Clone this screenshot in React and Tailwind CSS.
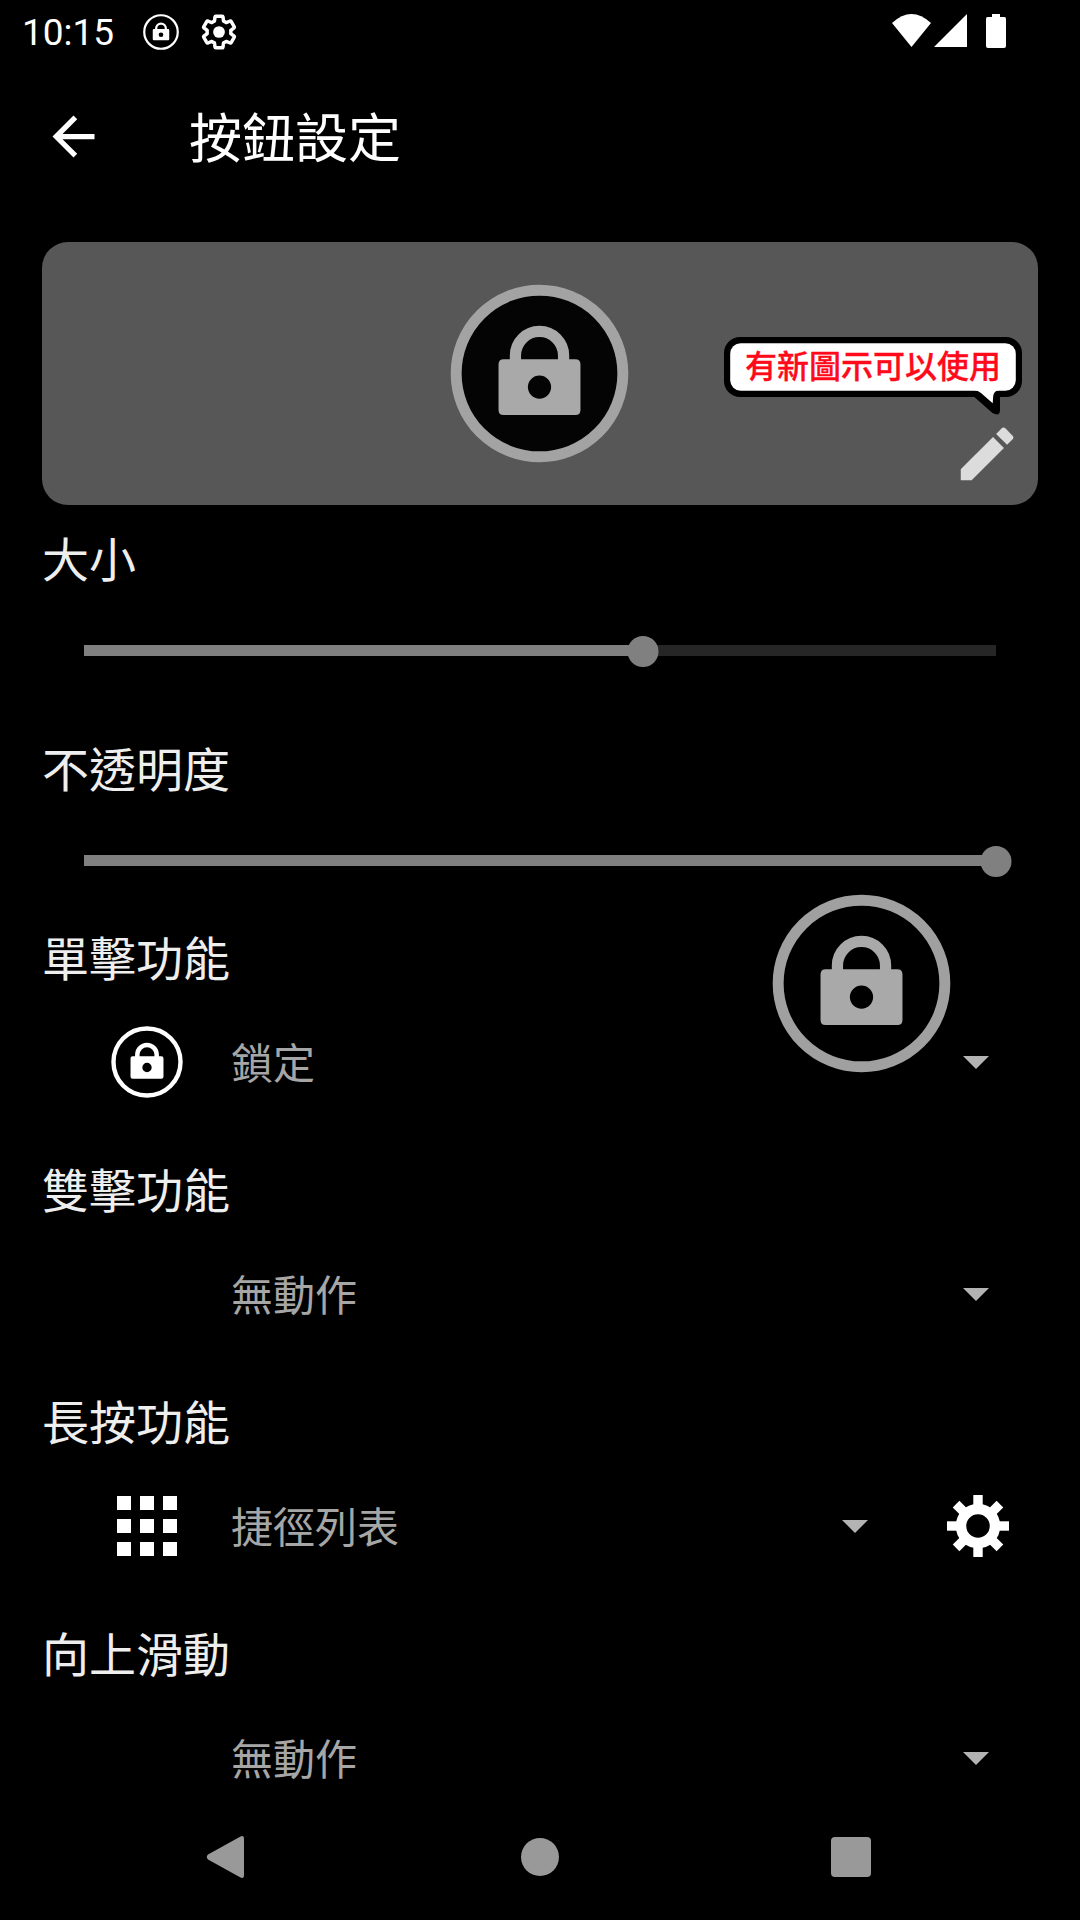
import { MdArrowBack, MdEdit } from 'react-icons/md';

const ACTIONS = [
    { id: 'single', title: '單擊功能', value: '鎖定', icon: 'lock' },
    { id: 'double', title: '雙擊功能', value: '無動作' },
    { id: 'long', title: '長按功能', value: '捷徑列表', icon: 'grid', configurable: true },
    { id: 'swipe-up', title: '向上滑動', value: '無動作' },
];

export default function App() {
    return (
        <div
            lang="zh-TW"
            className="relative flex h-[1920px] w-[1080px] flex-col overflow-hidden bg-black font-['Noto_Sans_CJK_TC',sans-serif]"
        >
            <StatusBar />

            {/* App bar */}
            <header className="flex h-[147px] shrink-0 items-center pl-[42px] text-white">
                <MdArrowBack className="size-[63px]" />
                <h1 className="ml-[84px] pb-[4px] text-[53px] leading-[64px]">按鈕設定</h1>
            </header>

            <main className="flex flex-1 flex-col overflow-hidden">
                <PreviewCard />
                <SliderSetting title="大小" percent={61.35} className="mt-[19px]" />
                <SliderSetting title="不透明度" percent={100} className="mt-[21px]" />
                <div className="flex flex-col gap-[18px]">
                    {ACTIONS.map((action) => (
                        <ActionSetting key={action.id} {...action} />
                    ))}
                </div>
            </main>

            <NavigationBar />

            {/* Floating button shown on top of the page */}
            <LockIcon
                className="absolute top-[894px] left-[772px] size-[179px]"
                ring="#a0a0a0"
                color="#a9a9a9"
            />
        </div>
    );
}

function StatusBar() {
    return (
        <div className="flex h-[63px] shrink-0 items-center justify-between pr-[74px] pl-[22px] text-white">
            <div className="flex items-center">
                <span className="w-[121px] pt-[2px] font-[Roboto,sans-serif] text-[37px] leading-[44px]">10:15</span>
                <LockIcon className="size-[36px]" ring="#fff" color="#fff" />
                <svg viewBox="0 0 24 24" className="ml-[21px] size-[38px]" fill="none">
                    <path
                        d="M19.43 12.98c.04-.32.07-.64.07-.98s-.03-.66-.07-.98l2.11-1.65c.19-.15.24-.42.12-.64l-2-3.46a.5.5 0 0 0-.61-.22l-2.49 1c-.52-.4-1.08-.73-1.69-.98l-.38-2.65A.49.49 0 0 0 14 2h-4c-.25 0-.46.18-.49.42l-.38 2.65c-.61.25-1.17.59-1.69.98l-2.49-1a.5.5 0 0 0-.61.22l-2 3.46c-.13.22-.07.49.12.64l2.11 1.65c-.04.32-.07.65-.07.98s.03.66.07.98l-2.11 1.65c-.19.15-.24.42-.12.64l2 3.46c.12.22.39.3.61.22l2.49-1c.52.4 1.08.73 1.69.98l.38 2.65c.03.24.24.42.49.42h4c.25 0 .46-.18.49-.42l.38-2.65c.61-.25 1.17-.59 1.69-.98l2.49 1c.23.09.49 0 .61-.22l2-3.46c.12-.22.07-.49-.12-.64z"
                        stroke="currentColor"
                        strokeWidth="2.2"
                        strokeLinejoin="round"
                    />
                    <circle cx="12" cy="12" r="3.7" fill="currentColor" />
                </svg>
            </div>
            <div className="flex items-center pb-px">
                <svg viewBox="0 0 39 34" className="h-[34px] w-[39px]" fill="currentColor">
                    <path d="M0 9Q19.500 -9 39 9L19.500 33z" />
                </svg>
                <svg viewBox="0 0 33 34" className="ml-[3px] h-[34px] w-[33px]" fill="currentColor">
                    <path d="M33 0v33H0z" />
                </svg>
                <svg viewBox="0 0 20 34" className="ml-[19px] h-[34px] w-[20px]" fill="currentColor">
                    <path d="M6 0h8v3h4.500Q20 3 20 5v27q0 2-2 2H2q-2 0-2-2V5q0-2 1.500-2H6z" />
                </svg>
            </div>
        </div>
    );
}

function PreviewCard() {
    return (
        <section className="relative mx-[42px] mt-[32px] flex h-[263px] shrink-0 items-center justify-center rounded-[26px] bg-[#575757]">
            <LockIcon className="mr-px size-[179px]" ring="#a3a3a3" color="#a9a9a9" fill="#040404" />
            <MdEdit className="absolute right-[16px] bottom-[16px] size-[70px] text-[#dcdcdc]" />

            {/* "New icons" speech bubble */}
            <div className="absolute top-[95px] right-[16px] h-[79px] w-[298px]">
                <svg viewBox="0 0 298 79" className="absolute inset-0">
                    <rect width="298" height="60" rx="16" />
                    <path d="M248 58L268.500 76Q276 80 276 73V58z" />
                    <rect x="6.200" y="6.200" width="285.600" height="47.600" rx="10.500" fill="#fff" />
                    <path d="M250 53Q254 53.500 257 56L268.700 66.300L269.200 59Q269.800 54 275 53z" fill="#fff" />
                </svg>
                <p className="relative pt-[3px] pl-[21px] text-[32px] leading-[48px] font-medium whitespace-nowrap text-[#ff0a1b] [-webkit-text-stroke:0.3px_#ff0a1b]">
                    有新圖示可以使用
                </p>
            </div>
        </section>
    );
}

function SettingTitle({ children }) {
    return <h2 className="h-[64px] pt-px pl-[42px] text-[47px] leading-[64px] text-[#eee]">{children}</h2>;
}

function SliderSetting({ title, percent, className }) {
    return (
        <section className={`shrink-0 ${className}`}>
            <SettingTitle>{title}</SettingTitle>
            <div className="flex h-[125px] items-center px-[84px]">
                <div className="relative h-[11px] w-full bg-[#262626]">
                    <div className="h-full bg-[#808080]" style={{ width: `${percent}%` }} />
                    <div
                        className="absolute top-[-9px] -ml-[0.5px] size-[31px] -translate-x-1/2 rounded-full bg-[#808080]"
                        style={{ left: `${percent}%` }}
                    />
                </div>
            </div>
        </section>
    );
}

function ActionSetting({ title, value, icon, configurable = false }) {
    return (
        <section className="shrink-0">
            <SettingTitle>{title}</SettingTitle>
            <div className="flex h-[150px] items-center pr-[42px] pl-[84px]">
                <div className="flex w-[126px] justify-center">
                    {icon === 'lock' && <LockIcon className="size-[72px]" ring="#fff" color="#fff" />}
                    {icon === 'grid' && <GridIcon />}
                </div>
                <span className="flex-1 pb-[3px] pl-[21px] text-[42px] leading-[60px] text-[#a6a6a6]">{value}</span>
                <svg viewBox="0 0 26 13" className="mr-[49.5px] h-[13px] w-[26px]" fill="#b3b3b3">
                    <path d="M0 0h26L13 13z" />
                </svg>
                {configurable && (
                    <button className="flex w-[121px] justify-center">
                        <GearIcon />
                    </button>
                )}
            </div>
        </section>
    );
}

function NavigationBar() {
    return (
        <nav className="flex h-[126px] shrink-0 items-center justify-between pr-[209px] pl-[206px]">
            <svg viewBox="0 0 38 42" className="h-[42px] w-[38px]" fill="#999">
                <path d="M34.500 .5Q38 -1 38 3v36q0 4-3.500 2.500L2 23.500Q-.5 21 2 18.500z" />
            </svg>
            <div className="ml-[4px] size-[38px] rounded-full bg-[#999]" />
            <div className="size-[40px] rounded-[4px] bg-[#999]" />
        </nav>
    );
}

function LockIcon({ className, ring, color, fill = 'none' }) {
    return (
        <svg viewBox="0 0 180 180" className={className}>
            <circle cx="90" cy="90" r="83.800" fill={fill} stroke={ring} strokeWidth="11" />
            <path d="M65.800 78v-6.100a24.200 24.200 0 0 1 48.400 0V78" fill="none" stroke={color} strokeWidth="11.300" />
            <path
                d="M54 75.600h72q5.200 0 5.200 5.200v45.800q0 5.200-5.200 5.200H54q-5.200 0-5.200-5.200V80.800q0-5.200 5.200-5.200zM90 92a11.700 11.700 0 1 0 0 23.400a11.700 11.700 0 1 0 0-23.400z"
                fill={color}
                fillRule="evenodd"
            />
        </svg>
    );
}

function GridIcon() {
    return (
        <div className="grid grid-cols-3 gap-[8.5px]">
            {Array.from({ length: 9 }, (_, i) => (
                <div key={i} className="size-[14.5px] bg-white" />
            ))}
        </div>
    );
}

function GearIcon() {
    return (
        <svg viewBox="-31 -31 62 62" className="size-[62px]">
            {[0, 45, 90, 135].map((angle) => (
                <g key={angle} transform={`rotate(${angle})`} fill="#fff">
                    <rect x="-4.700" y="-31" width="9.400" height="14" />
                    <rect x="-4.700" y="17" width="9.400" height="14" />
                </g>
            ))}
            <circle r="17" fill="none" stroke="#fff" strokeWidth="10.500" />
        </svg>
    );
}
